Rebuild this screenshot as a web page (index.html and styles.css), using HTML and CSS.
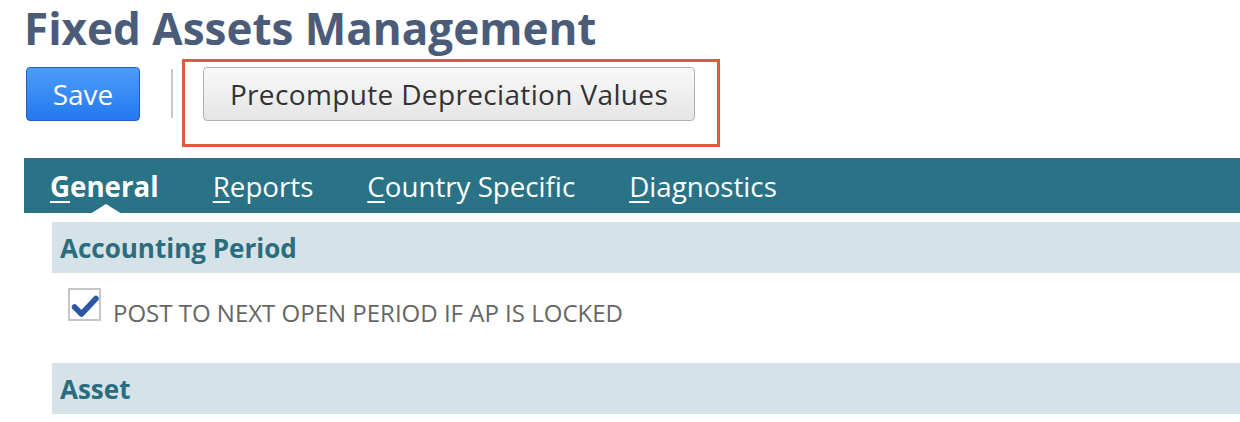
FILE: index.html
```html
<!DOCTYPE html>
<html>
<head>
<meta charset="utf-8">
<link rel="stylesheet" href="styles.css">
</head>
<body>
<div class="page">
  <h1 class="title">Fixed Assets Management</h1>
  <div class="toolbar">
    <button class="btn btn-save">Save</button>
    <span class="sep"></span>
    <div class="highlight">
      <button class="btn btn-plain">Precompute Depreciation Values</button>
    </div>
  </div>
  <div class="tabs">
    <span class="tab active"><u>G</u>eneral</span>
    <span class="tab"><u>R</u>eports</span>
    <span class="tab"><u>C</u>ountry Specific</span>
    <span class="tab"><u>D</u>iagnostics</span>
  </div>
  <div class="content">
    <div class="section-head">Accounting Period</div>
    <div class="field">
      <span class="checkbox">
        <svg width="33" height="33" viewBox="0 0 33 33">
          <rect x="1" y="1" width="31" height="31" fill="#fff" stroke="#c6c6c6" stroke-width="2"/>
          <path d="M6.5 19 L13.5 26 L28 10.5" fill="none" stroke="#2a58a6" stroke-width="5.5" stroke-linecap="round" stroke-linejoin="round"/>
        </svg>
      </span>
      <span class="label">POST TO NEXT OPEN PERIOD IF AP IS LOCKED</span>
    </div>
    <div class="section-head">Asset</div>
  </div>
</div>
</body>
</html>
```

FILE: styles.css
```css
html, body {
  margin: 0;
  padding: 0;
  background: #fff;
}
body {
  font-family: "Open Sans", "DejaVu Sans", sans-serif;
}
.page {
  padding-left: 24px;
}
.title {
  margin: 0;
  padding-top: 4px;
  font-size: 44px;
  line-height: 48px;
  font-weight: 700;
  color: #4b5c79;
}
.toolbar {
  display: flex;
  align-items: flex-start;
  margin-top: 7px;
  padding-left: 2px;
}
.btn {
  font-family: "Open Sans", "DejaVu Sans", sans-serif;
  font-size: 28px;
  height: 54px;
  padding: 0;
  border-radius: 4px;
  cursor: pointer;
  box-sizing: border-box;
}
.btn-save {
  width: 114px;
  margin-top: 8px;
  color: #fff;
  border: 1px solid #1c5fbf;
  background: linear-gradient(#4d9cfb, #2478ee);
}
.sep {
  width: 2px;
  height: 49px;
  margin-top: 10px;
  margin-left: 31px;
  background: #c8c8c8;
}
.highlight {
  margin-left: 9px;
  border: 3px solid #e05a3c;
  padding: 5px 22px 23px 18px;
}
.btn-plain {
  width: 492px;
  color: #333;
  letter-spacing: 0.35px;
  border: 1px solid #b3b3b3;
  background: linear-gradient(#f9f9f9, #e5e5e5);
}
.tabs {
  display: flex;
  align-items: center;
  height: 55px;
  margin-top: 11px;
  background: #2a7386;
  padding-left: 26px;
  gap: 54px;
}
.tab {
  position: relative;
  color: #fff;
  font-size: 27.7px;
  line-height: 55px;
  padding-top: 2px;
}
.tab u {
  text-decoration-thickness: 2px;
  text-underline-offset: 4px;
}
.tab.active {
  font-weight: 700;
}
.tab.active::after {
  content: "";
  position: absolute;
  left: 40px;
  bottom: 0;
  border-left: 16px solid transparent;
  border-right: 16px solid transparent;
  border-bottom: 10px solid #fff;
}
.content {
  margin-left: 28px;
  padding-top: 9px;
}
.section-head {
  box-sizing: border-box;
  height: 51px;
  line-height: 49px;
  padding-top: 2px;
  background: #d5e2e7;
  color: #2b6d7e;
  font-weight: 700;
  font-size: 26px;
  padding-left: 8px;
}
.field {
  display: flex;
  align-items: flex-start;
  height: 90px;
  box-sizing: border-box;
  padding-top: 15px;
  padding-left: 16px;
}
.checkbox {
  display: flex;
}
.label {
  margin-left: 12px;
  margin-top: 13px;
  font-size: 24px;
  line-height: 24px;
  color: #666;
}
```
